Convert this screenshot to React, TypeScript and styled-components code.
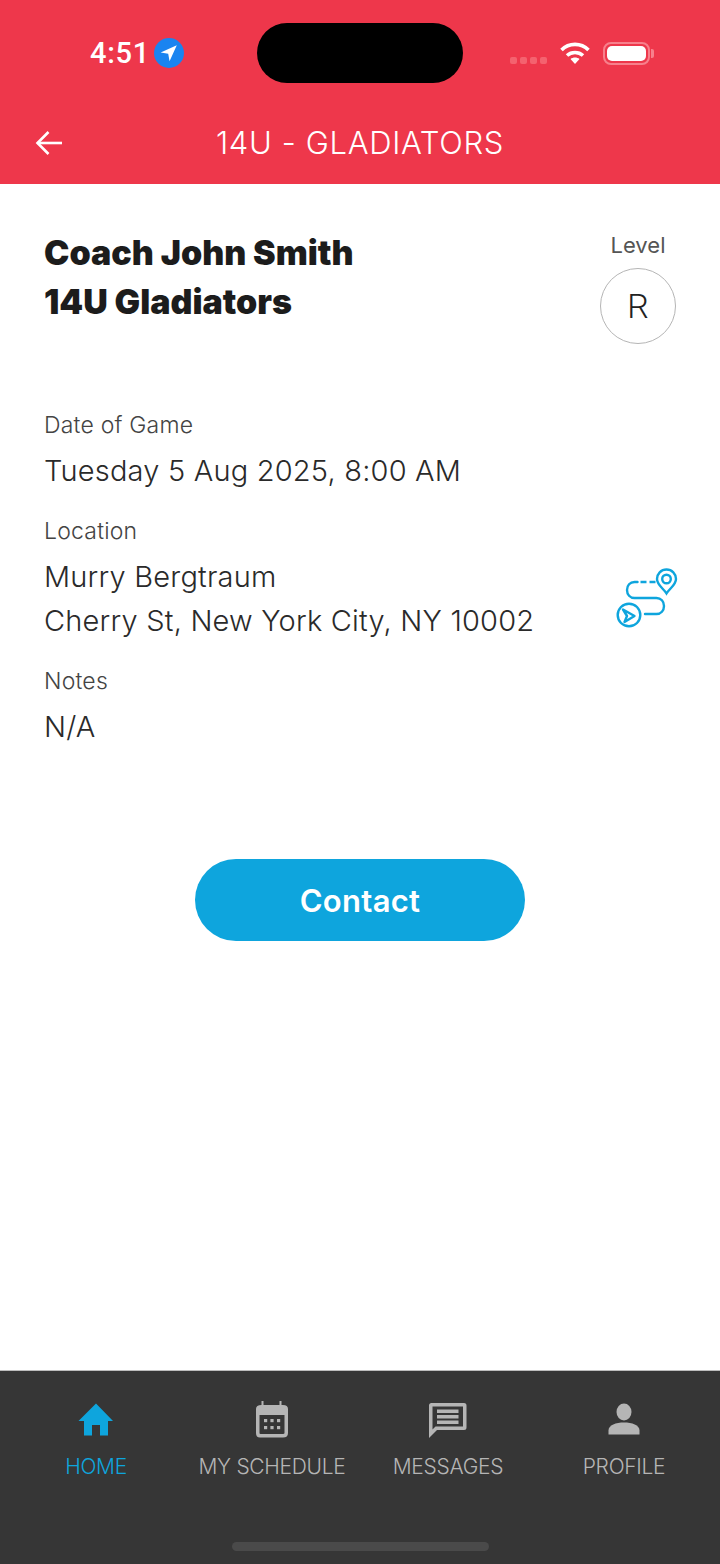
import { createGlobalStyle, styled } from "styled-components"

const GlobalStyle = createGlobalStyle`
  html, body {
    margin: 0;
    padding: 0;
    background: #fff;
  }
  * {
    box-sizing: border-box;
  }
`

const tabs = [
  { label: "HOME", icon: "home" },
  { label: "MY SCHEDULE", icon: "schedule" },
  { label: "MESSAGES", icon: "messages" },
  { label: "PROFILE", icon: "profile" },
]

function TabIcon({ name }: { name: string }) {
  if (name === "home") {
    return (
      <svg width="40" height="40" viewBox="0 0 40 40">
        <path fill="currentColor" d="M20 3.500 L37 21 H32 V35.500 H24 V25 H16 V35.500 H8 V21 H2.500 Z" />
      </svg>
    )
  }
  if (name === "schedule") {
    return (
      <svg width="40" height="40" viewBox="0 0 40 40">
        <path
          fill="currentColor"
          fillRule="evenodd"
          d="M9.500 1 H11.500 V5 H27.500 V1 H29.500 V5 H31 Q36 5 36 9 V33 Q36 37.500 31 37.500 H8 Q4 37.500 4 33 V9 Q4 5 9.500 5 Z M7.500 15 V33 Q7.500 34 8.500 34 H31 Q32.500 34 32.500 33 V15 Z"
        />
        <g fill="currentColor">
          <rect x="12" y="19" width="3.200" height="3.200" />
          <rect x="18.400" y="19" width="3.200" height="3.200" />
          <rect x="25" y="19" width="3.200" height="3.200" />
          <rect x="12" y="26" width="3.200" height="3.200" />
          <rect x="18.400" y="26" width="3.200" height="3.200" />
          <rect x="25" y="26" width="3.200" height="3.200" />
        </g>
      </svg>
    )
  }
  if (name === "messages") {
    return (
      <svg width="40" height="40" viewBox="0 0 40 40">
        <path
          fill="currentColor"
          fillRule="evenodd"
          d="M3.500 3 Q1 3 1 5.500 V38 L9 30 H36 Q38.500 30 38.500 27.500 V5.500 Q38.500 3 36 3 Z M4.500 6.500 H35 V26.500 H7.500 L4.500 29.500 Z"
        />
        <rect x="9" y="9.500" width="21.500" height="3.500" fill="currentColor" />
        <rect x="9" y="15" width="21.500" height="3.500" fill="currentColor" />
        <rect x="9" y="20.500" width="21.500" height="3.500" fill="currentColor" />
      </svg>
    )
  }
  return (
    <svg width="40" height="40" viewBox="0 0 40 40">
      <ellipse cx="20" cy="12" rx="7.500" ry="8.500" fill="currentColor" />
      <path fill="currentColor" d="M4.500 34.500 V30.500 C4.500 25 12 22.500 20 22.500 C28 22.500 35.500 25 35.500 30.500 V34.500 Z" />
    </svg>
  )
}

function RouteIcon() {
  return (
    <RouteSvg width="64" height="64" viewBox="0 0 64 64" fill="none" stroke="#0ea5dd" strokeWidth="2.400">
      <path d="M51.500 2.500 C46 2.500 42 6.800 42 12 C42 18 48.500 21.500 51.500 26.500 C54.500 21.500 61 18 61 12 C61 6.800 57 2.500 51.500 2.500 Z" />
      <circle cx="51.500" cy="12" r="4.300" />
      <path d="M40.500 15 H25" strokeDasharray="6 3" />
      <path
        d="M22.500 15 H19.500 C15 15 12 18.500 12 23 C12 27.500 15 31 19.500 31 H41.500 C46 31 49 34.500 49 39 C49 43.500 46 47 41.500 47 H30"
        strokeLinecap="round"
      />
      <circle cx="14" cy="48" r="11.300" />
      <path d="M8 42.500 L19.500 49 L9.500 55 L12 49 Z" strokeLinejoin="round" />
    </RouteSvg>
  )
}

export default function App() {
  return (
    <>
      <GlobalStyle />
      <Screen>
        <Header>
          <StatusBar>
            <Clock>
              <Time>4:51</Time>
              <LocationBadge>
                <svg width="20" height="20" viewBox="0 0 18 18">
                  <path fill="#fff" d="M16 2 L1.500 8.500 L8.300 9.700 L9.500 16.500 Z" />
                </svg>
              </LocationBadge>
            </Clock>
            <Island />
            <StatusIcons>
              <Dots>
                <Dot />
                <Dot />
                <Dot />
                <Dot />
              </Dots>
              <svg width="32" height="24" viewBox="0 0 32 24">
                <path fill="none" stroke="#fff" strokeWidth="3.600" d="M2.500 9 C10 1.500 22 1.500 29.500 9" />
                <path fill="none" stroke="#fff" strokeWidth="3.600" d="M8 14.500 C12.500 10.500 19.500 10.500 24 14.500" />
                <path fill="#fff" d="M11.500 18 C14 16 18 16 20.500 18 L16 23 Z" />
              </svg>
              <Battery>
                <BatteryFill />
              </Battery>
            </StatusIcons>
          </StatusBar>
          <Toolbar>
            <BackButton>
              <svg width="30" height="30" viewBox="0 0 30 30" fill="none" stroke="#fff" strokeWidth="2.600">
                <path d="M28 15 H3.500" />
                <path d="M14.500 4 L3.500 15 L14.500 26" />
              </svg>
            </BackButton>
            <Title>14U - GLADIATORS</Title>
          </Toolbar>
        </Header>

        <Main>
          <CoachRow>
            <CoachName>
              Coach John Smith
              <br />
              14U Gladiators
            </CoachName>
            <LevelBox>
              <LevelLabel>Level</LevelLabel>
              <LevelCircle>R</LevelCircle>
            </LevelBox>
          </CoachRow>

          <Field>
            <FieldLabel>Date of Game</FieldLabel>
            <FieldValue>Tuesday 5 Aug 2025, 8:00 AM</FieldValue>
          </Field>

          <Field>
            <FieldLabel>Location</FieldLabel>
            <LocationRow>
              <FieldValue>
                Murry Bergtraum
                <br />
                Cherry St, New York City, NY 10002
              </FieldValue>
              <RouteIcon />
            </LocationRow>
          </Field>

          <Field>
            <FieldLabel>Notes</FieldLabel>
            <FieldValue>N/A</FieldValue>
          </Field>

          <ContactButton>Contact</ContactButton>
        </Main>

        <TabBar>
          <Tabs>
            {tabs.map((tab, index) => (
              <Tab key={tab.label} $active={index === 0}>
                <TabIcon name={tab.icon} />
                <TabLabel>{tab.label}</TabLabel>
              </Tab>
            ))}
          </Tabs>
          <HomeIndicator />
        </TabBar>
      </Screen>
    </>
  )
}

const RouteSvg = styled.svg`
  flex-shrink: 0;
  margin-right: -3px;
`

const Screen = styled.div`
  width: 720px;
  height: 1564px;
  display: flex;
  flex-direction: column;
  background: #fff;
  font-family: "Inter", "Liberation Sans", sans-serif;
  overflow: hidden;
`

const Header = styled.header`
  height: 184px;
  flex-shrink: 0;
  background: #ee374b;
  color: #fff;
`

const StatusBar = styled.div`
  height: 105px;
  padding: 23px 70px 0 90px;
  display: flex;
  align-items: flex-start;
`

const Clock = styled.div`
  width: 167px;
  height: 60px;
  display: flex;
  align-items: center;
  gap: 4px;
`

const Time = styled.span`
  font-family: "Roboto", sans-serif;
  font-size: 29px;
  font-weight: 500;
  letter-spacing: 0.7px;
`

const LocationBadge = styled.span`
  width: 30px;
  height: 30px;
  border-radius: 50%;
  background: #1a84f0;
  display: flex;
  align-items: center;
  justify-content: center;
`

const Island = styled.div`
  width: 206px;
  height: 60px;
  border-radius: 30px;
  background: #000;
  flex-shrink: 0;
`

const StatusIcons = styled.div`
  flex: 1;
  height: 60px;
  display: flex;
  align-items: center;
  justify-content: flex-end;
  gap: 12px;
`

const Dots = styled.div`
  display: flex;
  gap: 3px;
  margin-top: 14px;
`

const Dot = styled.span`
  width: 7px;
  height: 7px;
  border-radius: 2px;
  background: #f4626f;
`

const Battery = styled.div`
  width: 47px;
  height: 23px;
  padding: 2px;
  border: 2px solid #f7808c;
  border-radius: 8px;
  position: relative;
  &::after {
    content: "";
    position: absolute;
    right: -6px;
    top: 5px;
    width: 3px;
    height: 9px;
    border-radius: 0 2px 2px 0;
    background: #f7808c;
  }
`

const BatteryFill = styled.div`
  height: 100%;
  border-radius: 5px;
  background: #fff;
`

const Toolbar = styled.div`
  height: 74px;
  display: flex;
  align-items: center;
  justify-content: center;
  position: relative;
`

const BackButton = styled.div`
  position: absolute;
  left: 34px;
  top: 23px;
  width: 30px;
  height: 30px;
`

const Title = styled.h1`
  margin: 0;
  font-size: 31px;
  font-weight: 300;
  letter-spacing: 0.65px;
  line-height: 1;
`

const Main = styled.main`
  flex: 1;
  padding: 44px 44px 0;
  display: flex;
  flex-direction: column;
  color: #2a2a2a;
`

const CoachRow = styled.div`
  display: flex;
  justify-content: space-between;
  align-items: flex-start;
  margin-bottom: 65px;
`

const CoachName = styled.h2`
  margin: 0;
  font-size: 34px;
  font-weight: 900;
  line-height: 49px;
  color: #1c1c1c;
`

const LevelBox = styled.div`
  padding-top: 2px;
  display: flex;
  flex-direction: column;
  align-items: center;
`

const LevelLabel = styled.div`
  font-size: 22px;
  line-height: 30px;
  color: #555;
  margin-bottom: 8px;
`

const LevelCircle = styled.div`
  width: 76px;
  height: 76px;
  border: 1.500px solid #b5b5b5;
  border-radius: 50%;
  display: flex;
  align-items: center;
  justify-content: center;
  font-family: "Roboto", sans-serif;
  font-size: 34px;
  font-weight: 300;
  color: #222;
`

const Field = styled.section`
  margin-bottom: 22px;
`

const FieldLabel = styled.div`
  font-size: 23px;
  font-weight: 300;
  letter-spacing: 0.2px;
  line-height: 32px;
  color: #444;
  margin-bottom: 8px;
`

const FieldValue = styled.div`
  font-size: 29px;
  font-weight: 300;
  letter-spacing: 0.2px;
  line-height: 44px;
  color: #2a2a2a;
`

const LocationRow = styled.div`
  display: flex;
  justify-content: space-between;
  align-items: center;
`

const ContactButton = styled.button`
  align-self: center;
  width: 330px;
  height: 82px;
  margin-top: 88px;
  border: none;
  border-radius: 41px;
  background: #0ea5dd;
  color: #fff;
  font-family: inherit;
  font-size: 31px;
  font-weight: 600;
  letter-spacing: 0.3px;
`

const TabBar = styled.nav`
  height: 194px;
  flex-shrink: 0;
  border-top: 1px solid #bdbdbd;
  background: #363636;
  display: flex;
  flex-direction: column;
  align-items: center;
`

const Tabs = styled.div`
  width: 100%;
  padding: 29px 8px 0;
  display: grid;
  grid-template-columns: repeat(4, 176px);
`

const Tab = styled.div<{ $active: boolean }>`
  display: flex;
  flex-direction: column;
  align-items: center;
  gap: 12px;
  color: ${(p) => (p.$active ? "#0ea5dd" : "#b5b5b5")};
`

const TabLabel = styled.span`
  font-size: 21px;
  font-weight: 300;
  letter-spacing: -0.3px;
  line-height: 30px;
  white-space: nowrap;
`

const HomeIndicator = styled.div`
  width: 257px;
  height: 9px;
  margin-top: 60px;
  border-radius: 5px;
  background: #4a4a4a;
`
